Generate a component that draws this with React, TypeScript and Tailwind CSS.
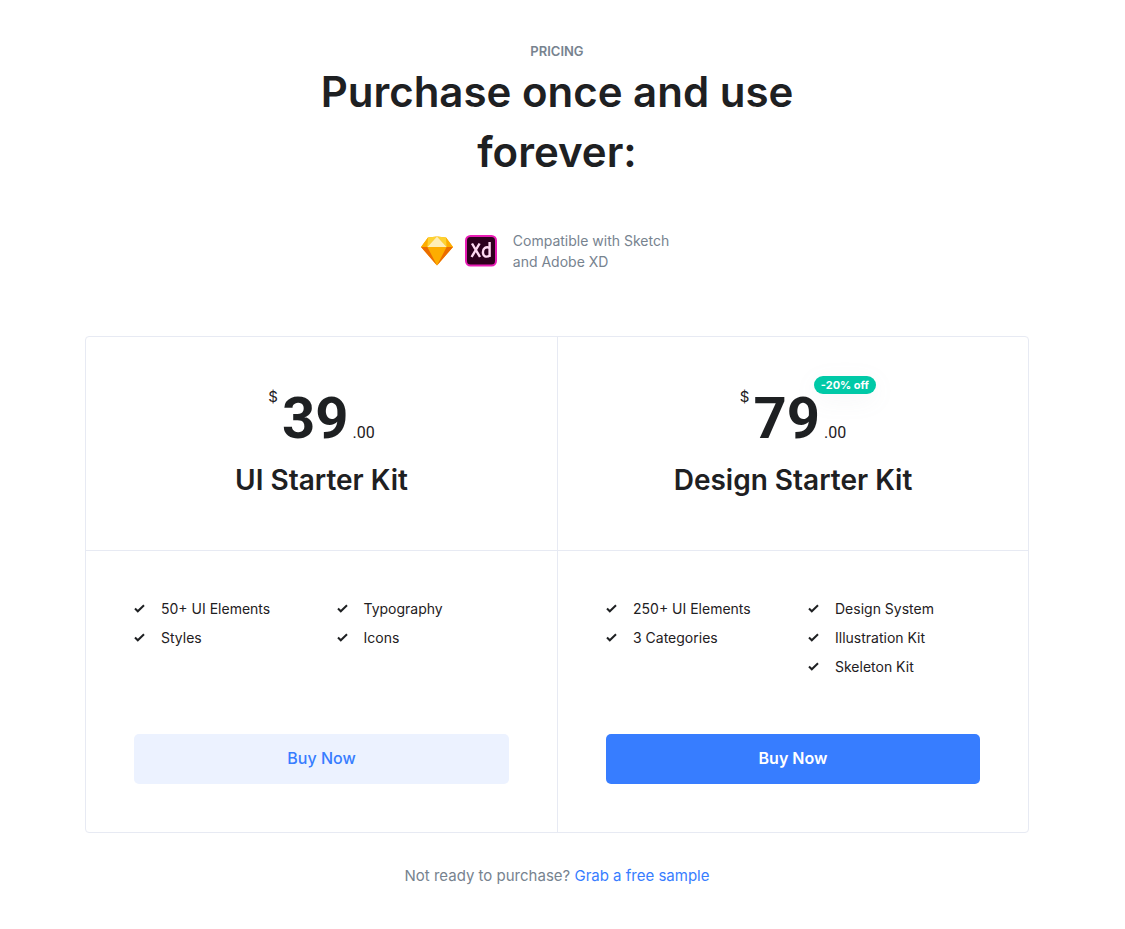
import React from "react";

type Plan = {
  name: string;
  amount: string;
  badge?: string;
  features: string[][];
  primary?: boolean;
};

const plans: Plan[] = [
  {
    name: "UI Starter Kit",
    amount: "39",
    features: [
      ["50+ UI Elements", "Styles"],
      ["Typography", "Icons"],
    ],
  },
  {
    name: "Design Starter Kit",
    amount: "79",
    badge: "-20% off",
    features: [
      ["250+ UI Elements", "3 Categories"],
      ["Design System", "Illustration Kit", "Skeleton Kit"],
    ],
    primary: true,
  },
];

function SketchLogo() {
  return (
    <svg viewBox="0 0 32 30" className="h-[30px] w-8" aria-hidden="true">
      <path d="M7 1.6 16 .6l9 1L32 11 16 29.5 0 11Z" fill="#fdad00" />
      <path d="M0 11h6.4L16 29.5ZM32 11h-6.4L16 29.5Z" fill="#eb6c00" />
      <path d="M7 1.6 0 11h6.4ZM25 1.6 32 11h-6.4Z" fill="#fdad00" />
      <path d="M7 1.6 16 .6 6.4 11ZM25 1.6 16 .6 25.6 11Z" fill="#fdd231" />
      <path d="M16 .6 6.4 11h19.2Z" fill="#feeeb7" />
    </svg>
  );
}

function XdLogo() {
  return (
    <svg viewBox="0 0 32 32" className="size-8" aria-hidden="true">
      <rect x="1" y="1" width="30" height="29.6" rx="4.5" fill="#2e001e" stroke="#e81cb4" strokeWidth="2" />
      <g fill="none" stroke="#ffd9f2" strokeWidth="2.4">
        <path d="m7 8.5 8 13.5M14.6 8.5 6.6 22" />
        <path d="M24.6 7V20c0 1 .1 1.5.2 2" />
        <path d="M24.6 12.8c-4-1.5-6.7.7-6.7 4.5 0 4.5 3.5 5.2 6.7 3.5" />
      </g>
    </svg>
  );
}

function CheckIcon() {
  return (
    <svg viewBox="0 0 11 9" className="h-[9px] w-[11px] shrink-0" aria-hidden="true">
      <path d="m1 4.5 2.8 2.8L10 1.3" fill="none" stroke="#1e2022" strokeWidth="2" />
    </svg>
  );
}

function PlanCard({ plan }: { plan: Plan }) {
  return (
    <article className="flex flex-col border-[#e7eaf3] not-first:border-l">
      <header className="flex h-[214px] flex-col items-center border-b border-[#e7eaf3] pt-12">
        <div className="relative flex h-[62px] items-stretch gap-1 text-base leading-6">
          <span className="text-[15px]">$</span>
          <span className="font-['Roboto',sans-serif] text-[58px] leading-[66px] font-bold">{plan.amount}</span>
          <span className="self-end font-['Roboto',sans-serif] leading-7">.00</span>
          {plan.badge && (
            <span className="absolute -top-[9px] left-[74px] rounded-full bg-[#00c9a7] px-[7px] text-[11px] leading-[18px] font-bold whitespace-nowrap text-white shadow-[0_6px_24px_rgba(140,152,164,0.08)]">
              {plan.badge}
            </span>
          )}
        </div>
        <h3 className="mt-[13px] text-[28px] leading-10 font-semibold">{plan.name}</h3>
      </header>
      <div className="flex grow flex-col px-12 pt-[47px] pb-12">
        <div className="mb-[57px] grid grow grid-cols-2 gap-[30px]">
          {plan.features.map((column, i) => (
            <ul key={i} className="flex flex-col gap-2">
              {column.map((feature) => (
                <li key={feature} className="flex items-center gap-4 text-[14px] leading-[21px] whitespace-nowrap">
                  <CheckIcon />
                  {feature}
                </li>
              ))}
            </ul>
          ))}
        </div>
        <button
          type="button"
          className={
            plan.primary
              ? "h-[50px] w-full rounded-[5px] bg-[#377dff] pb-[2px] text-base font-semibold text-white"
              : "h-[50px] w-full rounded-[5px] bg-[#ecf2ff] pb-[2px] text-base font-medium text-[#377dff]"
          }
        >
          Buy Now
        </button>
      </div>
    </article>
  );
}

export default function App() {
  return (
    <div className="min-h-screen bg-white pr-[11px] font-['Inter',sans-serif] text-[#1e2022]">
      <main className="mx-auto flex max-w-[944px] flex-col pt-10 pb-8">
        <header className="mx-auto flex max-w-[550px] flex-col items-center text-center">
          <p className="text-[13px] leading-[22px] font-semibold text-[#77838f]">PRICING</p>
          <h2 className="text-[42px] leading-[60px] font-semibold">Purchase once and use forever:</h2>
        </header>
        <div className="mt-12 flex items-center justify-center pr-6">
          <div className="flex items-center gap-3">
            <SketchLogo />
            <XdLogo />
          </div>
          <p className="ml-4 text-[14px] leading-[21px] text-[#77838f]">
            Compatible with Sketch
            <br />
            and Adobe XD
          </p>
        </div>
        <section className="mt-16 grid grid-cols-2 rounded-[4px] border border-[#e7eaf3]">
          {plans.map((plan) => (
            <PlanCard key={plan.name} plan={plan} />
          ))}
        </section>
        <p className="mt-8 text-center text-[15px] leading-[22px] text-[#77838f]">
          Not ready to purchase?{" "}
          <a href="#sample" className="text-[#377dff]">
            Grab a free sample
          </a>
        </p>
      </main>
    </div>
  );
}
